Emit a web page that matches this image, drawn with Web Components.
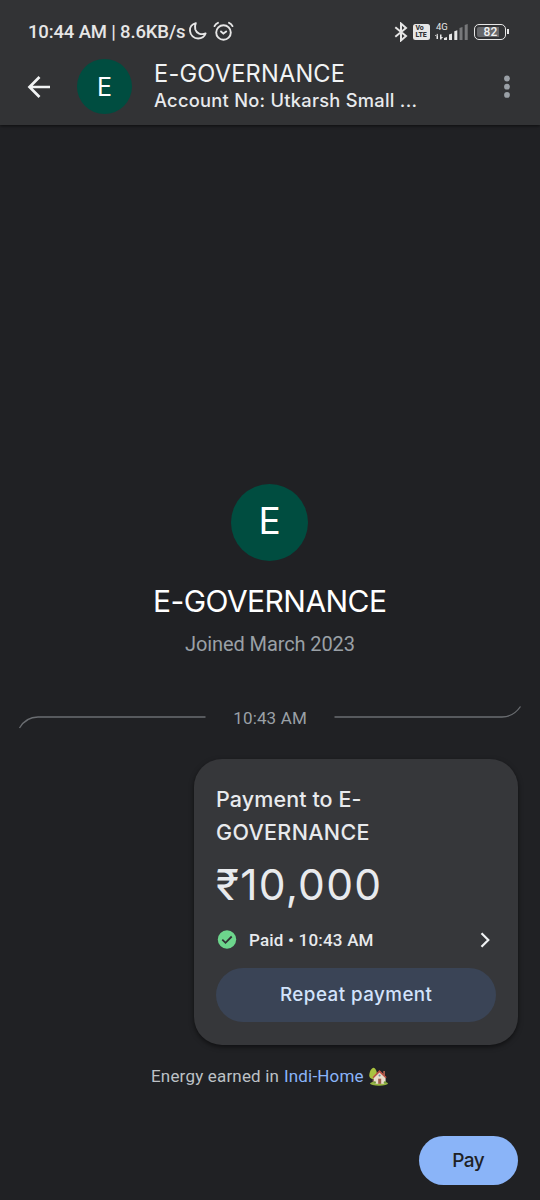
<!DOCTYPE html>
<html lang="en">
<head>
<meta charset="utf-8">
<title>E-GOVERNANCE</title>
<style>
html,body{margin:0;padding:0;background:#202124}
body{width:540px;height:1200px;overflow:hidden;font-family:Roboto,sans-serif;color:#e8eaed}
</style>
</head>
<body>
<pay-screen></pay-screen>
<script>
const define = (name, html, ready) => {
  const t = document.createElement('template');
  t.innerHTML = html;
  customElements.define(name, class extends HTMLElement {
    connectedCallback() {
      if (this.shadowRoot) return;
      this.attachShadow({mode: 'open'}).append(t.content.cloneNode(true));
      if (ready) ready(this);
    }
  });
};

/* A single line of text, tracked so that it fills the given width. */
define('tracked-text', `
<style>
:host{display:block;white-space:nowrap}
:host([face=display]){font-family:Inter,sans-serif}
span{display:inline-block}
</style><span><slot></slot></span>`, el => {
  const span = el.shadowRoot.querySelector('span');
  const gaps = [...el.textContent].length;
  const width = +el.getAttribute('width');
  const step = (width - span.getBoundingClientRect().width) / (gaps - 1);
  span.style.letterSpacing = step + 'px';
  span.style.marginRight = -step + 'px';
});

define('initial-avatar', `
<style>
:host{box-sizing:border-box;display:flex;align-items:center;justify-content:center;flex:none;border-radius:50%;background:#004d40;color:#fff;font-family:Inter,sans-serif}
</style><slot></slot>`);

define('status-bar', `
<style>
:host{display:flex;align-items:center;height:48px;padding:8px 31px 0 28px;font-weight:500;font-size:18.500px;color:#e6e6e6}
tracked-text{margin-top:-1px}
svg{display:block;flex:none}
.moon{margin:-2px 0 0 3px}.alarm{margin:-2px 0 0 5px}
.grow{flex:1}
.volte{box-sizing:border-box;width:17px;height:16px;margin:-1px 0 0 5px;border-radius:2.500px;background:#e6e6e6;color:#303134;font:800 7px/6.500px Roboto,sans-serif;padding:1.500px 0 0 2px}
.net{width:33px;height:20px;margin:-1px 0 0 5px}
.bat{display:flex;align-items:center;margin:-1px 0 0 6px}
.cell{box-sizing:border-box;width:32px;height:16px;border:1.600px solid #e6e6e6;border-radius:5px;padding:2px 1.500px}
.fill{height:100%;border-radius:2px;background:linear-gradient(90deg,#66676a 82%,transparent 82%);font:500 12px/11px Roboto,sans-serif;text-align:center;color:#f1f1f1}
.tip{width:1.600px;height:5px;margin-left:1px;background:#e6e6e6}
</style>
<tracked-text width="157.500">10:44 AM | 8.6KB/s</tracked-text>
<svg class="moon" width="20" height="20" viewBox="0 0 20 20" fill="none" stroke="#e6e6e6" stroke-width="1.900" stroke-linejoin="round"><path d="M7.800 2.100C4 3 1.600 6.100 2 10c.4 4.400 3.900 7.500 8.100 7.500 3.500 0 6.300-1.900 7.500-5-4.800 1.600-9.100-.2-10.300-4-.6-2.200-.4-4.400.5-6.400Z"/></svg>
<svg class="alarm" width="21" height="21" viewBox="0 0 21 21" fill="none" stroke="#e6e6e6" stroke-width="1.900" stroke-linecap="round"><circle cx="10.500" cy="11.500" r="7.300"/><path d="M1.500 5.100C2.300 3.500 3.500 2.400 5 1.800M19.500 5.100C18.700 3.500 17.500 2.400 16 1.800M8 10.500l2.400 2.100 2.800-2.100"/></svg>
<span class="grow"></span>
<svg width="14" height="20" viewBox="0 0 14 20" fill="none" stroke="#e6e6e6" stroke-width="2" style="margin-top:-1px"><path d="M1.300 5.300 12 14 7 18.400V1.600L12 6 1.300 14.700"/></svg>
<div class="volte">Vo<br>LTE</div>
<svg class="net" viewBox="0 0 33 20"><text x="1" y="8" font-family="Roboto" font-weight="400" font-size="9.500" fill="#e6e6e6">4G</text><g fill="#e6e6e6"><path d="M1.500 12v5H3v-5zM-.2 14 2.200 11.500V14zM5 12.500v5H6.500v-5zM5.800 17.500 8.200 15H5.800z"/><path d="M9 18v-2l3-1v3zM14 18v-5.500l3-1V18zM19.300 18V9.300l3-1V18z"/><path fill="#77787a" d="M24.500 18V6l3-1v13zM29.700 18V3l3-1v16z"/></g></svg>
<div class="bat"><div class="cell"><div class="fill">82</div></div><div class="tip"></div></div>`);

define('app-header', `
<style>
:host{display:block;height:125px;background:#323335;box-shadow:0 1px 3px #0009;position:relative}
.bar{display:flex;align-items:center;height:61px;padding:0 27px}
.back{display:block;width:24px;height:24px}
initial-avatar{width:55px;height:55px;margin-left:26px;font-size:25px}
.names{margin-left:22px;padding-top:2px;height:55px;flex:1}
.title{font-size:23.600px;line-height:28px;color:#f1f3f4}
.sub{font-size:18.300px;line-height:25px;font-weight:450;color:#e8eaed}
.more{display:block;margin-right:3px}
</style>
<status-bar></status-bar>
<div class="bar">
<svg class="back" viewBox="0 0 24 24" fill="none" stroke="#f1f3f4" stroke-width="2.700"><path d="M23 12H2.500M12.500 2 2.500 12l10 10"/></svg>
<initial-avatar>E</initial-avatar>
<div class="names"><tracked-text class="title" face="display" width="191">E-GOVERNANCE</tracked-text><tracked-text class="sub" face="display" width="263">Account No: Utkarsh Small ...</tracked-text></div>
<svg class="more" width="6" height="24" viewBox="0 0 6 24" fill="#9aa0a6"><circle cx="3" cy="3.500" r="2.900"/><circle cx="3" cy="11.700" r="2.900"/><circle cx="3" cy="19.900" r="2.900"/></svg>
</div>`);

define('payee-hero', `
<style>
:host{display:flex;flex-direction:column;align-items:center;padding-top:358.500px}
initial-avatar{width:77px;height:77px;font-size:37px;padding-bottom:3px;margin-right:1px}
.name{margin-top:20px;font-size:30px;line-height:40px;color:#fff}
.joined{margin-top:9.500px;font-size:20px;line-height:28px;color:#9aa0a6;height:27px}
</style>
<initial-avatar>E</initial-avatar>
<tracked-text class="name" face="display" width="234">E-GOVERNANCE</tracked-text>
<tracked-text class="joined" width="170">Joined March 2023</tracked-text>`);

define('time-divider', `
<style>
:host{display:flex;align-items:center;justify-content:space-between;height:30px;margin:45px 18px 0;font-size:17px;line-height:24px;color:#9aa0a6}
tracked-text{padding-top:1px}
svg{display:block;fill:none;stroke:#6a6d71;stroke-width:1.300}
</style>
<svg width="188" height="30" viewBox="0 0 188 30"><path d="M1.500 26C5 20 11 15 20 15H187.500"/></svg>
<tracked-text width="73.500">10:43 AM</tracked-text>
<svg width="188" height="30" viewBox="0 0 188 30"><path d="M.5 15H168C177 15 182 11 186.500 4.500"/></svg>`);

define('payment-card', `
<style>
:host{display:block;box-sizing:border-box;width:324px;height:286px;margin:27px 22px 0 auto;padding:24px 22px 22px;border-radius:28px;background:#36373a;box-shadow:0 2px 5px #0008}
.head{font-size:21.500px;line-height:33px;font-weight:450}
.amount{font-size:42.500px;line-height:60px;margin-top:6px}
.paid{display:flex;align-items:center;height:38px;margin-top:5.500px;font-size:17px;font-weight:500}
.paid tracked-text{margin-left:12px;flex:1}
svg{display:block}
.button{box-sizing:border-box;display:flex;align-items:center;justify-content:center;height:54px;padding-bottom:2px;margin-top:9.500px;border-radius:27px;background:#3a4456;color:#d2e3fc;font-size:18.800px;font-weight:450}
</style>
<tracked-text class="head" face="display" width="145.500">Payment to E-</tracked-text>
<tracked-text class="head" face="display" width="153.500">GOVERNANCE</tracked-text>
<tracked-text class="amount" face="display" width="165">₹10,000</tracked-text>
<div class="paid">
<svg width="21" height="21" viewBox="0 0 21 21"><circle cx="11" cy="10.500" r="9.200" fill="#6dd58c"/><path d="m6.300 10.700 3.200 3.100 6.200-6.300" fill="none" stroke="#303134" stroke-width="1.800"/></svg>
<tracked-text width="124.500">Paid • 10:43 AM</tracked-text>
<svg width="18" height="18" viewBox="0 0 18 18" fill="none" stroke="#f1f3f4" stroke-width="2.200"><path d="m3.500 2.200 6.800 6.800-6.800 6.800"/></svg>
</div>
<div class="button"><tracked-text face="display" width="152">Repeat payment</tracked-text></div>`);

define('reward-note', `
<style>
:host{display:flex;align-items:center;height:30px;margin:16px 0 0 151px;font-size:17px;color:#bdc1c6}
.link{color:#8ab4f8;margin-left:5px}
svg{display:block;margin-left:5px}
</style>
<tracked-text width="128">Energy earned in</tracked-text>
<tracked-text class="link" width="79.500">Indi-Home</tracked-text>
<svg width="19" height="19" viewBox="0 0 19 19"><path d="M3.500 8h1.500v8H3.500z" fill="#79554a"/><path d="M4.300.7C1.700 1.500.3 5.500.3 8.400c0 2.300 1.500 3.500 3.900 3.500S8 10.500 8 7.900C8 4.500 6.500.4 4.300.7Z" fill="#a9c23f"/><ellipse cx="10" cy="16.500" rx="9" ry="2.200" fill="#97b640"/><path d="M14.200 4h1.800v4h-1.800z" fill="#a65c4b"/><path d="M4.800 9.800 10.600 4l6 5.800v7H4.800z" fill="#e8ddcb"/><path d="m3.500 10.300 7-7.300 7.200 7.300-1.100 1-6.100-5.800-5.900 5.800z" fill="#b94f43"/><path d="M9.200 11.700h3v5.100h-3z" fill="#9d5948"/><circle cx="10.600" cy="8.500" r="1.100" fill="#668c9f"/><circle cx="5.700" cy="15.500" r="1.300" fill="#739c35"/><circle cx="16" cy="15.500" r="1.300" fill="#739c35"/></svg>`);

define('pay-button', `
<style>
:host{box-sizing:border-box;display:flex;align-items:center;justify-content:center;width:99px;height:49px;margin:45px 22px 0 auto;padding-bottom:1px;border-radius:25px;background:#8ab4f8;color:#202124;font-size:19px;font-weight:450}
</style>
<tracked-text face="display" width="32.500">Pay</tracked-text>`);

define('pay-screen', `
<style>:host{display:block;width:540px;height:1200px;background:#202124}</style>
<app-header></app-header><payee-hero></payee-hero><time-divider></time-divider>
<payment-card></payment-card><reward-note></reward-note><pay-button></pay-button>`);
</script>
</body>
</html>
